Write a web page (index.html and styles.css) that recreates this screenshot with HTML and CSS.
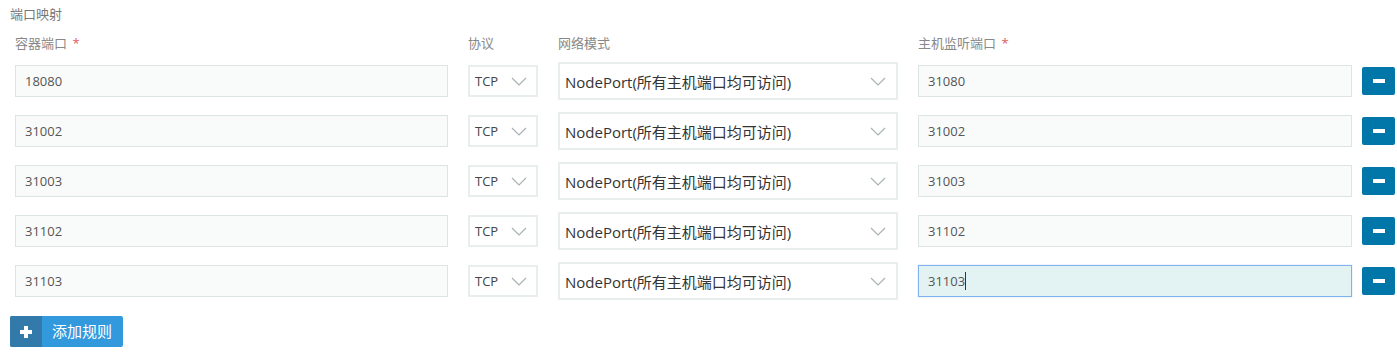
FILE: index.html
```html
<!DOCTYPE html>
<html lang="zh-CN">
	<head>
		<meta charset="utf-8">
		<title>端口映射</title>
		<link rel="stylesheet" href="styles.css">
	</head>
	<body>
		<div class="ports">
			<div class="title">端口映射</div>

			<div class="line head">
				<div class="label c-port">容器端口 <em>*</em></div>
				<div class="label c-proto">协议</div>
				<div class="label c-mode">网络模式</div>
				<div class="label c-host">主机监听端口 <em>*</em></div>
			</div>

			<div class="line row">
				<div class="field c-port">18080</div>
				<div class="sel c-proto"><span>TCP</span><svg width="16" height="9" viewBox="0 0 16 9"><path d="M1 1l7 7 7-7" fill="none" stroke="#a9b2b2" stroke-width="1.2"/></svg></div>
				<div class="sel c-mode"><span>NodePort(所有主机端口均可访问)</span><svg width="16" height="9" viewBox="0 0 16 9"><path d="M1 1l7 7 7-7" fill="none" stroke="#a9b2b2" stroke-width="1.2"/></svg></div>
				<div class="field c-host">31080</div>
				<a href="javascript:;" class="del"><i></i></a>
			</div>

			<div class="line row">
				<div class="field c-port">31002</div>
				<div class="sel c-proto"><span>TCP</span><svg width="16" height="9" viewBox="0 0 16 9"><path d="M1 1l7 7 7-7" fill="none" stroke="#a9b2b2" stroke-width="1.2"/></svg></div>
				<div class="sel c-mode"><span>NodePort(所有主机端口均可访问)</span><svg width="16" height="9" viewBox="0 0 16 9"><path d="M1 1l7 7 7-7" fill="none" stroke="#a9b2b2" stroke-width="1.2"/></svg></div>
				<div class="field c-host">31002</div>
				<a href="javascript:;" class="del"><i></i></a>
			</div>

			<div class="line row">
				<div class="field c-port">31003</div>
				<div class="sel c-proto"><span>TCP</span><svg width="16" height="9" viewBox="0 0 16 9"><path d="M1 1l7 7 7-7" fill="none" stroke="#a9b2b2" stroke-width="1.2"/></svg></div>
				<div class="sel c-mode"><span>NodePort(所有主机端口均可访问)</span><svg width="16" height="9" viewBox="0 0 16 9"><path d="M1 1l7 7 7-7" fill="none" stroke="#a9b2b2" stroke-width="1.2"/></svg></div>
				<div class="field c-host">31003</div>
				<a href="javascript:;" class="del"><i></i></a>
			</div>

			<div class="line row">
				<div class="field c-port">31102</div>
				<div class="sel c-proto"><span>TCP</span><svg width="16" height="9" viewBox="0 0 16 9"><path d="M1 1l7 7 7-7" fill="none" stroke="#a9b2b2" stroke-width="1.2"/></svg></div>
				<div class="sel c-mode"><span>NodePort(所有主机端口均可访问)</span><svg width="16" height="9" viewBox="0 0 16 9"><path d="M1 1l7 7 7-7" fill="none" stroke="#a9b2b2" stroke-width="1.2"/></svg></div>
				<div class="field c-host">31102</div>
				<a href="javascript:;" class="del"><i></i></a>
			</div>

			<div class="line row">
				<div class="field c-port">31103</div>
				<div class="sel c-proto"><span>TCP</span><svg width="16" height="9" viewBox="0 0 16 9"><path d="M1 1l7 7 7-7" fill="none" stroke="#a9b2b2" stroke-width="1.2"/></svg></div>
				<div class="sel c-mode"><span>NodePort(所有主机端口均可访问)</span><svg width="16" height="9" viewBox="0 0 16 9"><path d="M1 1l7 7 7-7" fill="none" stroke="#a9b2b2" stroke-width="1.2"/></svg></div>
				<div class="field c-host focus">31103<b class="caret"></b></div>
				<a href="javascript:;" class="del"><i></i></a>
			</div>

			<a href="javascript:;" class="add"><span class="add-icon"></span><span class="add-text">添加规则</span></a>
		</div>
	</body>
</html>
```

FILE: styles.css
```css
body {
	margin: 0;
	font-family: "Open Sans", "Noto Sans CJK SC", sans-serif;
	font-size: 13px;
	color: #555;
	background: #fff;
}
a {
	text-decoration: none;
}

.ports {
	padding: 6px 0 0 10px;
}

.title {
	height: 16px;
	line-height: 16px;
	font-size: 13px;
	color: #777;
}

/* 列宽 */
.line {
	display: flex;
	gap: 20px;
	margin-left: 5px;
}
.c-port {
	width: 433px;
}
.c-proto {
	width: 70px;
}
.c-mode {
	width: 340px;
}
.c-host {
	width: 434px;
}

.head {
	margin-top: 13px;
}
.label {
	height: 16px;
	line-height: 16px;
	font-size: 13px;
	color: #888;
}
.label em {
	font-style: normal;
	color: #e25a5a;
	margin-left: 2px;
}

.row {
	height: 38px;
	align-items: center;
	margin-top: 12px;
}
.head + .row {
	margin-top: 11px;
}

.field {
	box-sizing: border-box;
	height: 32px;
	line-height: 30px;
	padding-left: 9px;
	border: 1px solid #dde4e4;
	background-color: #f9fbfb;
	color: #555;
	font-size: 13px;
}
.field.focus {
	border-color: #7fb2ee;
	background-color: #e3f3f3;
	box-shadow: 0 0 1px #9cc4f2;
}
.caret {
	display: inline-block;
	width: 1px;
	height: 18px;
	background: #333;
	vertical-align: -4px;
}

.sel {
	box-sizing: border-box;
	display: flex;
	align-items: center;
	justify-content: space-between;
	border: 2px solid #e8eeee;
	background: #fff;
}
.sel.c-proto {
	height: 32px;
	padding: 0 9px 0 5px;
	font-size: 13px;
	color: #444;
}
.sel.c-mode {
	height: 38px;
	padding: 0 10px 0 5px;
	font-size: 15px;
	color: #333;
}
.sel svg {
	display: block;
}

.del {
	display: flex;
	align-items: center;
	justify-content: center;
	width: 33px;
	height: 28px;
	margin-left: -10px;
	border-radius: 2px;
	background-color: #0077a8;
}
.del i {
	display: block;
	width: 12px;
	height: 4px;
	background: #fff;
}

.add {
	display: inline-flex;
	margin-top: 16px;
	height: 31px;
	border-radius: 2px;
	overflow: hidden;
	background-color: #3399dd;
}
.add-icon {
	position: relative;
	width: 32px;
	background-color: #337aaa;
}
.add-icon:before,
.add-icon:after {
	content: '';
	position: absolute;
	background: #fff;
	left: 50%;
	top: 50%;
}
.add-icon:before {
	width: 12px;
	height: 4px;
	margin: -2px 0 0 -6px;
}
.add-icon:after {
	width: 4px;
	height: 12px;
	margin: -6px 0 0 -2px;
}
.add-text {
	padding: 0 11px 0 10px;
	line-height: 31px;
	font-size: 15px;
	color: #fff;
}
```
